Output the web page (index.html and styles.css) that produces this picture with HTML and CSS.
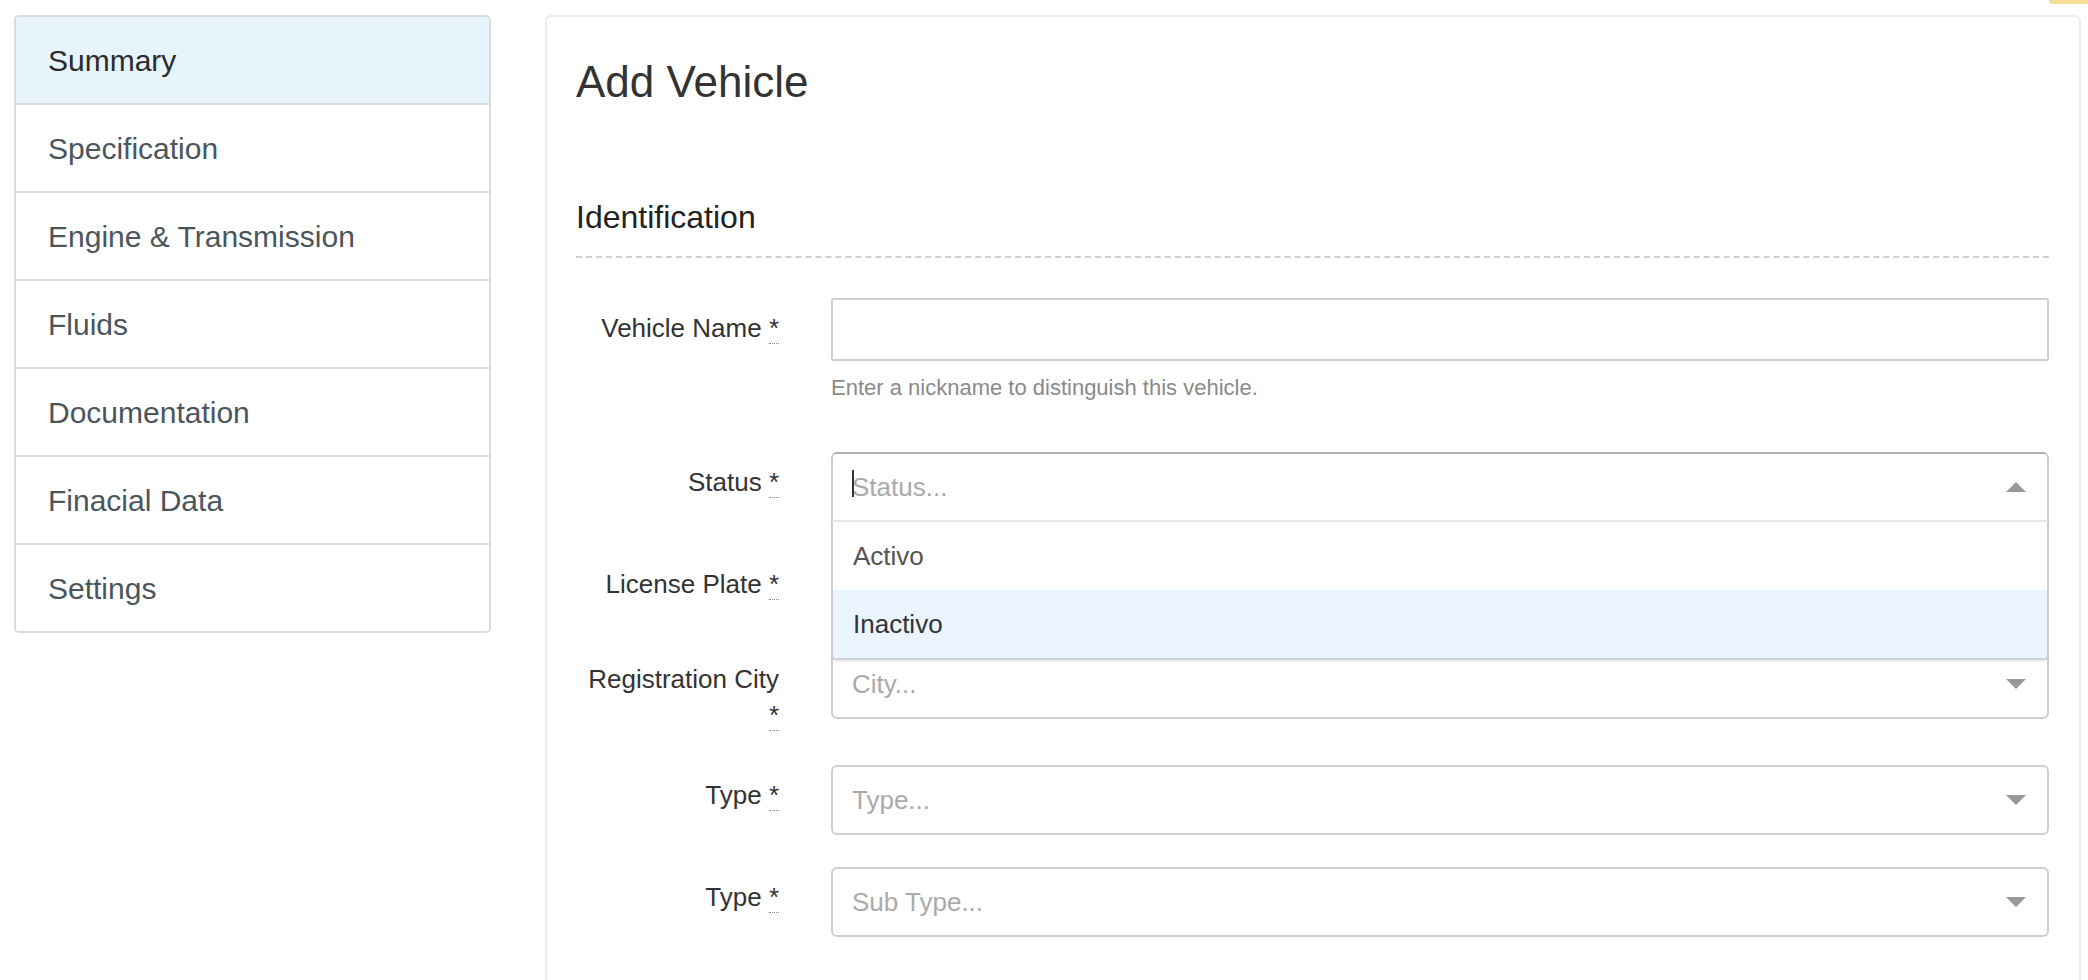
FILE: index.html
```html
<!DOCTYPE html>
<html lang="en">
<head>
<meta charset="utf-8">
<title>Add Vehicle</title>
<link rel="stylesheet" href="styles.css">
</head>
<body>
<div class="corner-badge"></div>
<div class="page">
  <nav class="side-nav">
    <a class="side-item active">Summary</a>
    <a class="side-item">Specification</a>
    <a class="side-item">Engine &amp; Transmission</a>
    <a class="side-item">Fluids</a>
    <a class="side-item">Documentation</a>
    <a class="side-item">Finacial Data</a>
    <a class="side-item">Settings</a>
  </nav>
  <main class="panel">
    <h1 class="title">Add Vehicle</h1>
    <h2 class="section-title">Identification</h2>
    <form class="form">
      <div class="form-row">
        <label class="form-label">Vehicle Name <abbr title="required">*</abbr></label>
        <div class="form-field">
          <input class="text-input" type="text">
          <p class="help">Enter a nickname to distinguish this vehicle.</p>
        </div>
      </div>
      <div class="form-row">
        <label class="form-label">Status <abbr title="required">*</abbr></label>
        <div class="form-field">
          <div class="select is-open">
            <div class="select-control">
              <span class="caret-cursor"></span>
              <span class="select-placeholder">Status...</span>
              <span class="select-arrow up"></span>
            </div>
            <div class="select-menu">
              <div class="select-option">Activo</div>
              <div class="select-option focused">Inactivo</div>
            </div>
          </div>
        </div>
      </div>
      <div class="form-row">
        <label class="form-label">License Plate <abbr title="required">*</abbr></label>
        <div class="form-field">
          <input class="text-input" type="text">
        </div>
      </div>
      <div class="form-row">
        <label class="form-label">Registration City <abbr title="required">*</abbr></label>
        <div class="form-field">
          <div class="select">
            <div class="select-control">
              <span class="select-placeholder">City...</span>
              <span class="select-arrow"></span>
            </div>
          </div>
        </div>
      </div>
      <div class="form-row">
        <label class="form-label">Type <abbr title="required">*</abbr></label>
        <div class="form-field">
          <div class="select">
            <div class="select-control">
              <span class="select-placeholder">Type...</span>
              <span class="select-arrow"></span>
            </div>
          </div>
        </div>
      </div>
      <div class="form-row">
        <label class="form-label">Type <abbr title="required">*</abbr></label>
        <div class="form-field">
          <div class="select">
            <div class="select-control">
              <span class="select-placeholder">Sub Type...</span>
              <span class="select-arrow"></span>
            </div>
          </div>
        </div>
      </div>
    </form>
  </main>
</div>
</body>
</html>
```

FILE: styles.css
```css
html, body {
  margin: 0;
  padding: 0;
  overflow: hidden;
  background: #fff;
}

body {
  font-family: "Liberation Sans", Arial, Helvetica, sans-serif;
  color: #333;
}

.corner-badge {
  position: absolute;
  top: 0;
  right: 0;
  width: 39px;
  height: 4px;
  background: #f5dd98;
  border-bottom-left-radius: 5px;
}

.page {
  display: flex;
  align-items: flex-start;
  gap: 54px;
  padding: 15px 7px 0 14px;
}

/* Sidebar */
.side-nav {
  flex: 0 0 477px;
  display: flex;
  flex-direction: column;
  border: 2px solid #d6dcdf;
  border-radius: 5px;
  overflow: hidden;
  box-sizing: border-box;
}

.side-item {
  display: block;
  flex: 0 0 auto;
  height: 88px;
  box-sizing: border-box;
  padding: 2px 32px 0;
  line-height: 84px;
  font-size: 30px;
  color: #4b555c;
  background: #fff;
  text-decoration: none;
}

.side-item:first-child {
  height: 86px;
}

.side-item + .side-item {
  border-top: 2px solid #d6dcdf;
}

.side-item.active {
  background: #e8f4fc;
  color: #2b2b2b;
}

/* Main panel */
.panel {
  flex: 1 1 auto;
  min-height: 1000px;
  border: 2px solid #e8eded;
  border-radius: 6px;
  padding: 0 30px 0 29px;
  box-sizing: border-box;
}

.title {
  margin: 41px 0 0;
  font-size: 44px;
  line-height: 48px;
  font-weight: normal;
  color: #333;
}

.section-title {
  margin: 94px 0 0;
  padding-bottom: 21px;
  font-size: 32px;
  line-height: 35px;
  font-weight: normal;
  color: #222;
  border-bottom: 2px dashed #cfcfcf;
}

.form {
  margin-top: 40px;
}

.form-row {
  display: grid;
  grid-template-columns: 203px 1fr;
  column-gap: 52px;
  margin-bottom: 32px;
}

.form-label {
  padding-top: 12px;
  font-size: 26px;
  line-height: 36px;
  text-align: right;
  color: #333;
}

.form-label abbr {
  text-decoration: none;
  border-bottom: 1px dotted #888;
  cursor: help;
}

.form-field {
  position: relative;
}

.text-input {
  display: block;
  width: 100%;
  height: 63px;
  box-sizing: border-box;
  border: 2px solid #cfcfcf;
  border-radius: 2px;
  padding: 0 20px;
  font-family: inherit;
  font-size: 26px;
  background: #fff;
  outline: none;
}

.help {
  margin: 11px 0 17px;
  font-size: 22px;
  line-height: 31px;
  color: #8a8a8a;
}

/* Select */
.select {
  position: relative;
}

.select-control {
  position: relative;
  display: flex;
  align-items: center;
  height: 70px;
  box-sizing: border-box;
  border: 2px solid #cfcfcf;
  border-radius: 6px;
  padding: 0 21px 0 19px;
  background: #fff;
}

.select-placeholder {
  flex: 1 1 auto;
  font-size: 26px;
  line-height: 66px;
  color: #aaa;
}

.select-arrow {
  flex: 0 0 auto;
  width: 0;
  height: 0;
  border-style: solid;
  border-width: 10px 10px 0;
  border-color: #999 transparent transparent;
}

.select-arrow.up {
  border-width: 0 10px 10px;
  border-color: transparent transparent #999;
}

.is-open .select-control {
  border-color: #b3b3b3 #cfcfcf #e6e6e6;
  border-bottom-left-radius: 0;
  border-bottom-right-radius: 0;
}

.caret-cursor {
  position: absolute;
  left: 19px;
  top: 16px;
  width: 2px;
  height: 27px;
  background: #333;
}

.select-menu {
  position: absolute;
  top: 100%;
  left: 0;
  right: 0;
  z-index: 5;
  background: #fff;
  border: 2px solid #cfcfcf;
  border-top: none;
  border-radius: 0 0 6px 6px;
  box-shadow: 0 2px 0 rgba(0, 0, 0, 0.06);
  overflow: hidden;
}

.select-option {
  padding: 16px 20px;
  font-size: 26px;
  line-height: 36px;
  color: #555;
}

.select-option.focused {
  background: #ebf5ff;
  color: #333;
}
```
